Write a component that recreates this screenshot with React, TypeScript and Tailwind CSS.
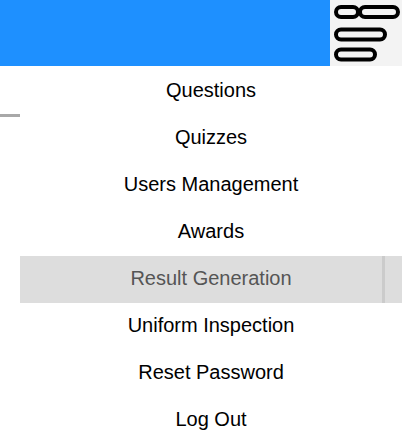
const ITEMS = [
  'Questions',
  'Quizzes',
  'Users Management',
  'Awards',
  'Result Generation',
  'Uniform Inspection',
  'Reset Password',
  'Log Out',
]

const ACTIVE = 'Result Generation'

function MenuIcon() {
  return (
    <svg width="72" height="66" viewBox="0 0 72 66" fill="none" stroke="#000" strokeWidth="4">
      <rect x="6" y="7" width="22" height="10" rx="5" />
      <rect x="30" y="7" width="38" height="10" rx="5" />
      <rect x="6" y="29.5" width="49" height="10" rx="5" />
      <rect x="6" y="49.5" width="39" height="10" rx="5" />
    </svg>
  )
}

export default function App() {
  return (
    <div className="min-h-[445px] w-[402px] bg-white font-['Liberation_Sans',Arial,sans-serif]">
      <div className="flex h-[66px]">
        <div className="flex-1 bg-[#1e90ff]" />
        <div className="w-[72px] bg-[#f3f3f3]">
          <MenuIcon />
        </div>
      </div>

      <div className="flex pt-[2px]">
        {/* left stub */}
        <div className="w-[20px] shrink-0">
          <div className="mt-[46px] h-[3px] bg-[#a8a8a8]" />
        </div>

        <ul className="flex-1">
          {ITEMS.map((item) => {
            const active = item === ACTIVE
            return (
              <li
                key={item}
                className={`relative pt-[11px] pb-[13px] text-center text-[20px] leading-[23px] ${
                  active ? 'bg-[#dddddd] text-[#555555]' : 'text-black'
                }`}
              >
                {item}
                {active && <span className="absolute right-[17px] top-0 h-full w-[3px] bg-[#cbcbcb]" />}
              </li>
            )
          })}
        </ul>
      </div>
    </div>
  )
}
